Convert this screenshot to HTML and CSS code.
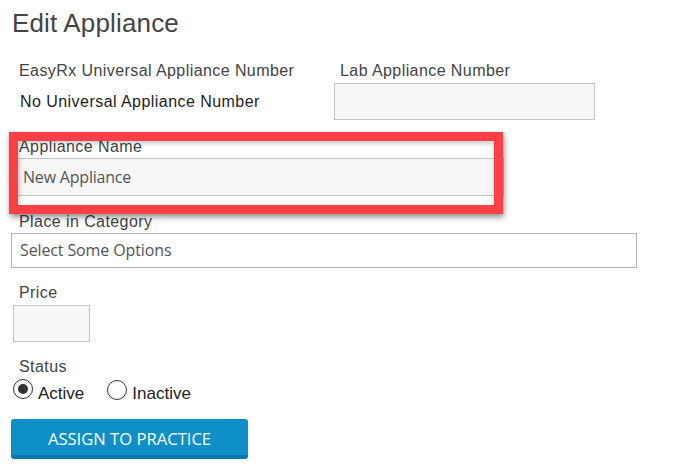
FILE: index.html
```html
<!DOCTYPE html>
<html>
<head>
<meta charset="utf-8">
<link rel="stylesheet" href="styles.css">
</head>
<body>
<div class="page">
  <h1 class="title">Edit Appliance</h1>
  <div class="top-row">
    <div class="col-left">
      <div class="label">EasyRx Universal Appliance Number</div>
      <div class="value">No Universal Appliance Number</div>
    </div>
    <div class="col-right">
      <div class="label">Lab Appliance Number</div>
      <div class="input lab-input"></div>
    </div>
  </div>
  <div class="field name-field">
    <div class="label">Appliance Name</div>
    <div class="input name-input">New Appliance</div>
  </div>
  <div class="field cat-field">
    <div class="label">Place in Category</div>
    <div class="select">Select Some Options</div>
  </div>
  <div class="field price-field">
    <div class="label">Price</div>
    <div class="input price-input"></div>
  </div>
  <div class="field status-field">
    <div class="label">Status</div>
    <div class="radio-row">
      <span class="radio checked"></span><span class="radio-text">Active</span>
      <span class="radio"></span><span class="radio-text">Inactive</span>
    </div>
  </div>
  <button class="btn">ASSIGN TO PRACTICE</button>
  <div class="highlight"></div>
</div>
</body>
</html>
```
FILE: styles.css
```css
html, body {
  margin: 0;
  padding: 0;
  background: #fff;
}
.page {
  position: relative;
  width: 690px;
  height: 468px;
  padding-left: 12px;
  box-sizing: border-box;
  font-family: "Liberation Sans", Arial, sans-serif;
  overflow: hidden;
}
.title {
  margin: 8px 0 0 0;
  font-size: 26px;
  line-height: 30px;
  font-weight: normal;
  color: #444;
  letter-spacing: 0.15px;
}
.top-row {
  display: flex;
  margin-top: 24px;
}
.col-left {
  width: 322px;
}
.col-right {
  width: 261px;
}
.label {
  font-size: 16px;
  line-height: 18px;
  color: #444;
  padding-left: 7px;
  letter-spacing: 0.42px;
}
.col-right .label {
  padding-left: 6px;
}
.value {
  margin-top: 13px;
  font-size: 16px;
  line-height: 18px;
  color: #1e1e1e;
  padding-left: 8px;
  letter-spacing: 0.45px;
}
.input {
  box-sizing: border-box;
  background: #f7f7f7;
  border: 1px solid #c4c4c4;
}
.lab-input {
  margin-top: 3px;
  width: 261px;
  height: 37px;
}
.field {
  display: flex;
  flex-direction: column;
  align-items: flex-start;
}
.name-field {
  margin-top: 18px;
}
.name-input {
  margin-top: 2px;
  width: 492px;
  height: 38px;
  font-family: "Open Sans", sans-serif;
  font-size: 16px;
  letter-spacing: -0.2px;
  line-height: 36px;
  color: #555;
  padding-left: 10px;
}
.cat-field {
  margin-top: 17px;
}
.select {
  box-sizing: border-box;
  margin-top: 2px;
  margin-left: -1px;
  width: 626px;
  height: 35px;
  border: 1px solid #b4b4b4;
  background: #fff;
  font-family: "Open Sans", sans-serif;
  font-size: 16px;
  line-height: 33px;
  color: #555;
  padding-left: 8px;
  letter-spacing: -0.12px;
}
.price-field {
  margin-top: 16px;
}
.price-input {
  margin-top: 3px;
  margin-left: 1px;
  width: 77px;
  height: 37px;
}
.status-field {
  margin-top: 16px;
}
.radio-row {
  display: flex;
  align-items: flex-start;
  height: 26px;
  margin-top: 3px;
  margin-left: 1px;
}
.radio {
  box-sizing: border-box;
  width: 20px;
  height: 20px;
  border: 1.5px solid #333;
  border-radius: 50%;
  background: #fff;
  display: flex;
  align-items: center;
  justify-content: center;
}
.radio + .radio-text + .radio {
  margin-top: 1px;
}
.radio.checked::after {
  content: "";
  width: 10px;
  height: 10px;
  border-radius: 50%;
  background: #333;
}
.radio-text {
  font-size: 17px;
  line-height: 22px;
  margin-top: 3.5px;
  margin-left: 5px;
  margin-right: 23px;
  color: #222;
}
.btn {
  display: block;
  margin-top: 14px;
  margin-left: -1px;
  width: 237px;
  height: 40px;
  box-sizing: border-box;
  border: none;
  border-bottom: 4px solid #0c78a9;
  border-radius: 3px;
  background: #0e8fc7;
  color: #fff;
  font-family: "Open Sans", sans-serif;
  font-size: 16.6px;
  padding: 2px 0 0 0;
  text-align: center;
}
.highlight {
  position: absolute;
  left: 9px;
  top: 132px;
  width: 494px;
  height: 82px;
  box-sizing: border-box;
  border: 9px solid #fc4045;
  box-shadow: 1px 3px 6px rgba(0, 0, 0, 0.45), inset 1px 2px 5px rgba(0, 0, 0, 0.25);
}
```
